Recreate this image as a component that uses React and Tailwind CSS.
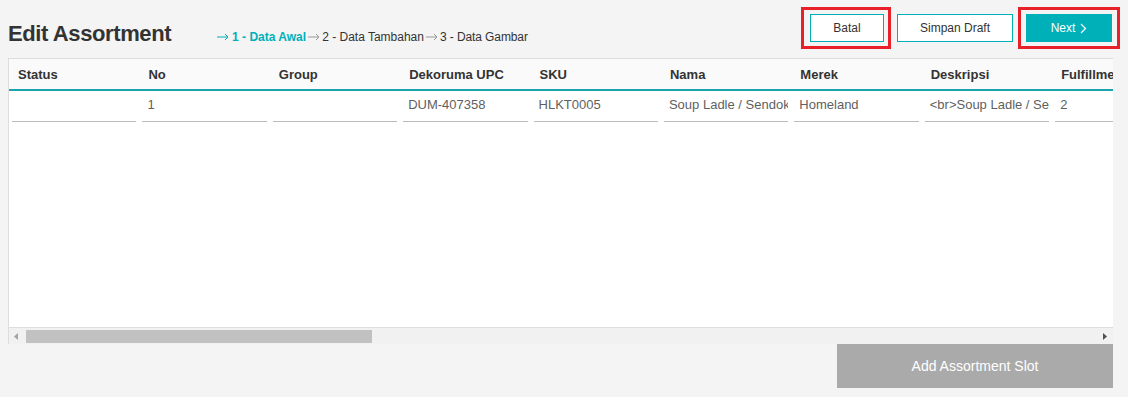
import React from 'react'

const columns = ['Status', 'No', 'Group', 'Dekoruma UPC', 'SKU', 'Nama', 'Merek', 'Deskripsi', 'Fulfillment']
const row = ['', '1', '', 'DUM-407358', 'HLKT0005', 'Soup Ladle / Sendok Sayur', 'Homeland', '<br>Soup Ladle / Sendok Sayur', '2']

function Arrow({ color }) {
  return (
    <svg width="12" height="8" viewBox="0 0 12 8" fill="none" stroke={color} strokeWidth="1">
      <path d="M0 4h11M8 1l3 3-3 3" />
    </svg>
  )
}

function App() {
  return (
    <div className="w-[1128px] h-[397px] bg-[#f4f4f4] overflow-hidden" style={{ fontFamily: '"Liberation Sans", Arial, sans-serif' }}>
      {/* top bar */}
      <div className="flex items-start h-[58px]">
        <h1 className="ml-[8px] mt-[20px] text-[22px] font-bold text-[#333] tracking-[-0.4px] leading-[28px]">Edit Assortment</h1>
        <div className="ml-[46px] mt-[29px] flex items-center text-[12px] text-[#333] leading-[16px]">
          <Arrow color="#00b0b9" />
          <span className="ml-[3px] font-bold text-[#00b0b9]">1 - Data Awal</span>
          <span className="ml-[2px]"><Arrow color="#999" /></span>
          <span className="ml-[2px]">2 - Data Tambahan</span>
          <span className="ml-[2px]"><Arrow color="#999" /></span>
          <span className="ml-[2px] tracking-[-0.1px]">3 - Data Gambar</span>
        </div>
        <div className="ml-auto mr-[8px] mt-[7px] flex items-start">
          <div className="border-[3px] border-[#e8202a] pl-[6px] pr-[4px] py-[4px]">
            <button className="w-[74px] h-[28px] border border-[#00b0b9] bg-white text-[12px] text-[#333]">Batal</button>
          </div>
          <button className="ml-[6px] mt-[7px] w-[116px] h-[28px] border border-[#00b0b9] bg-white text-[12px] text-[#333]">Simpan Draft</button>
          <div className="ml-[5px] border-[3px] border-[#e8202a] px-[5px] py-[4px]">
            <button className="w-[86px] h-[28px] bg-[#00b0b9] text-[12px] text-white flex items-center justify-center gap-[5px]">
              Next
              <svg width="7" height="11" viewBox="0 0 7 11" fill="none" stroke="white" strokeWidth="1.2">
                <path d="M1 1l4.5 4.5L1 10" />
              </svg>
            </button>
          </div>
        </div>
      </div>

      {/* table */}
      <div className="ml-[8px] w-[1105px] border-t border-l border-[#dddddd] bg-white overflow-hidden">
        <div className="flex h-[32px] bg-[#fafafa] border-b-2 border-[#1aa5ad]">
          {columns.map((c) => (
            <div key={c} className="w-[130.4px] shrink-0 pl-[9px] pt-[6px] text-[13px] font-bold text-[#333] whitespace-nowrap overflow-hidden">{c}</div>
          ))}
        </div>
        <div className="h-[236px] flex">
          {row.map((v, i) => (
            <div key={i} className="w-[130.4px] shrink-0 px-[3px] pt-[5px]">
              <div className="h-[26px] border-b border-[#bbbbbb] pl-[5px] pt-0 text-[13px] leading-[18px] text-[#5f5f5f] whitespace-nowrap overflow-hidden">{v}</div>
            </div>
          ))}
        </div>
        <div className="h-[17px] bg-[#f1f1f1] border-t border-[#dddddd] flex items-center">
          <svg className="ml-[5px]" width="5" height="7" viewBox="0 0 5 7"><path d="M4 0v7L0 3.5z" fill="#a3a3a3" /></svg>
          <div className="ml-[7px] w-[346px] h-[13px] bg-[#c1c1c1]" />
          <svg className="ml-auto mr-[5px]" width="5" height="7" viewBox="0 0 5 7"><path d="M0 0v7l4-3.5z" fill="#505050" /></svg>
        </div>
      </div>

      <div className="flex justify-end pr-[15px]">
        <button className="w-[276px] h-[44px] bg-[#aaaaaa] text-[14px] text-white">Add Assortment Slot</button>
      </div>
    </div>
  )
}

export default App
